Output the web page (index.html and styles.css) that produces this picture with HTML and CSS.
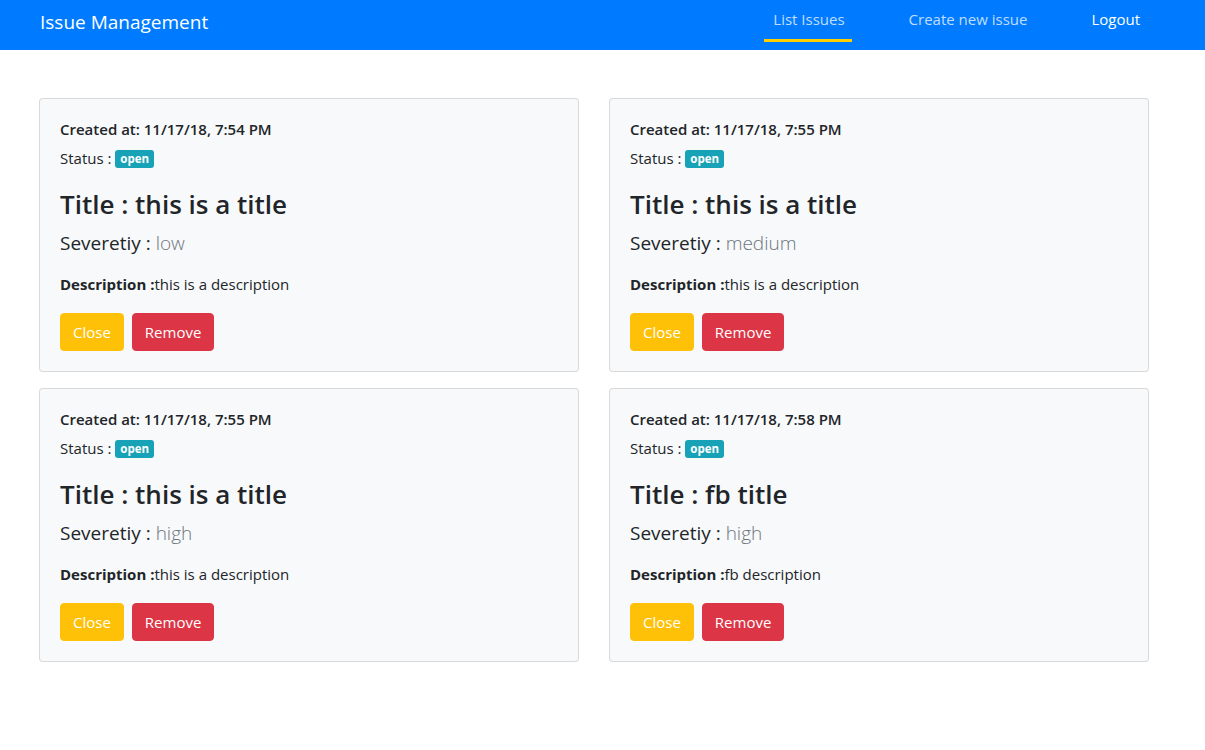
FILE: index.html
```html
<!DOCTYPE html>
<html>
<head>
<meta charset="utf-8">
<link rel="stylesheet" href="styles.css">
</head>
<body>
<nav class="navbar">
  <div class="nav-inner">
    <a class="brand">Issue Management</a>
    <ul class="nav">
      <li><a class="nav-link active">List Issues</a></li>
      <li class="nav-create"><a class="nav-link">Create new issue</a></li>
      <li class="nav-logout"><a class="nav-link logout">Logout</a></li>
    </ul>
  </div>
</nav>
<main class="container">
  <div class="grid">
    <div class="card">
      <h6 class="created">Created at: 11/17/18, 7:54 PM</h6>
      <p class="status">Status : <span class="badge">open</span></p>
      <h3 class="title">Title : this is a title</h3>
      <p class="severity">Severetiy : <span class="sev-val">low</span></p>
      <p class="desc"><b>Description :</b>this is a description</p>
      <div class="actions"><button class="btn btn-warning">Close</button><button class="btn btn-danger">Remove</button></div>
    </div>
    <div class="card">
      <h6 class="created">Created at: 11/17/18, 7:55 PM</h6>
      <p class="status">Status : <span class="badge">open</span></p>
      <h3 class="title">Title : this is a title</h3>
      <p class="severity">Severetiy : <span class="sev-val">medium</span></p>
      <p class="desc"><b>Description :</b>this is a description</p>
      <div class="actions"><button class="btn btn-warning">Close</button><button class="btn btn-danger">Remove</button></div>
    </div>
    <div class="card">
      <h6 class="created">Created at: 11/17/18, 7:55 PM</h6>
      <p class="status">Status : <span class="badge">open</span></p>
      <h3 class="title">Title : this is a title</h3>
      <p class="severity">Severetiy : <span class="sev-val">high</span></p>
      <p class="desc"><b>Description :</b>this is a description</p>
      <div class="actions"><button class="btn btn-warning">Close</button><button class="btn btn-danger">Remove</button></div>
    </div>
    <div class="card">
      <h6 class="created">Created at: 11/17/18, 7:58 PM</h6>
      <p class="status">Status : <span class="badge">open</span></p>
      <h3 class="title">Title : fb title</h3>
      <p class="severity">Severetiy : <span class="sev-val">high</span></p>
      <p class="desc"><b>Description :</b>fb description</p>
      <div class="actions"><button class="btn btn-warning">Close</button><button class="btn btn-danger">Remove</button></div>
    </div>
  </div>
</main>
</body>
</html>
```
FILE: styles.css
```css
* { box-sizing: border-box; }
html, body {
  margin: 0;
  padding: 0;
  background: #fff;
  color: #212529;
  font-family: "Open Sans", "Noto Sans", sans-serif;
  font-size: 16px;
  line-height: 1.5;
}
.navbar {
  background: #007bff;
  height: 50px;
}
.nav-inner {
  width: 1140px;
  margin-left: 24px;
  padding: 0 15px;
  height: 50px;
  display: flex;
  justify-content: space-between;
  align-items: flex-start;
}
.brand {
  color: #fff;
  font-size: 19px;
  line-height: 30px;
  margin-top: 7px;
  padding-left: 1px;
}
.nav {
  list-style: none;
  margin: 0;
  padding: 0;
  display: flex;
}
.nav-create { margin-left: 48px; }
.nav-logout { margin-left: 46px; }
.nav-link {
  display: block;
  color: rgba(255, 255, 255, 0.75);
  font-size: 15px;
  line-height: 20px;
  padding: 9px 9px 10px;
  border-bottom: 3px solid transparent;
}
.nav-link.active {
  border-bottom-color: #ffd000;
  padding-left: 9px;
  padding-right: 7px;
}
.nav-link.logout {
  color: #fff;
}
.container {
  width: 1140px;
  margin-left: 24px;
  padding: 48px 15px 0;
}
.grid {
  display: grid;
  grid-template-columns: 540px 540px;
  column-gap: 30px;
  row-gap: 16px;
}
.card {
  background: #f8f9fa;
  border: 1px solid rgba(0, 0, 0, 0.125);
  border-radius: 4px;
  padding: 18px 20px 20px;
}
.created {
  margin: 0 0 5px;
  font-size: 15px;
  font-weight: 600;
  line-height: 24px;
}
.status {
  margin: 0 0 16px;
  font-size: 15px;
  line-height: 24px;
}
.badge {
  display: inline-block;
  background: #17a2b8;
  color: #fff;
  font-size: 11.5px;
  font-weight: 700;
  line-height: 1;
  padding: 3px 5px 3px;
  border-radius: 3px;
  vertical-align: 1px;
}
.title {
  margin: 0 0 6px;
  font-size: 26px;
  font-weight: 600;
  line-height: 36px;
}
.severity {
  margin: 0 0 14px;
  font-size: 19px;
  line-height: 30px;
}
.sev-val {
  color: #6c757d;
  font-weight: 300;
}
.desc {
  margin: 0 0 17px;
  font-size: 15px;
  line-height: 24px;
}
.desc b { font-weight: 700; }
.actions {
  display: flex;
  gap: 8px;
}
.btn {
  font-family: inherit;
  font-size: 15px;
  line-height: 24px;
  color: #fff;
  border: 1px solid transparent;
  border-radius: 4px;
  padding: 6px 12px;
  height: 38px;
}
.btn-warning { background: #ffc107; border-color: #ffc107; }
.btn-danger { background: #dc3545; border-color: #dc3545; }
```
